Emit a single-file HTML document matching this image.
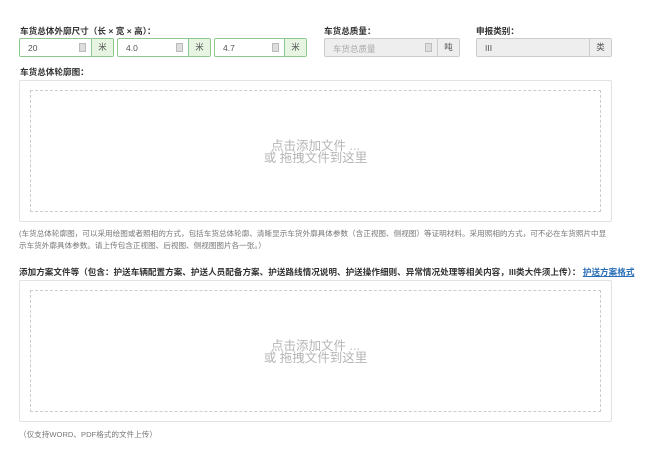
<!DOCTYPE html>
<html><head><meta charset="utf-8"><style>
*{box-sizing:border-box;margin:0;padding:0}
body{width:645px;height:449px;background:#fff;font-family:"Liberation Sans","Noto Sans CJK SC",sans-serif;position:relative;overflow:hidden;color:#333}
.a{position:absolute}
.lbl{font-size:8.6px;font-weight:bold;color:#333;white-space:nowrap}
.inp{position:absolute;height:19px;border:1px solid #8fc98f;border-radius:2px;display:flex;font-size:8.5px;background:#fff}
.inp .t{flex:1;padding:4px 8px;color:#555;position:relative}
.inp .ad{width:22px;border-left:1px solid #8fc98f;background:#e6f4e1;text-align:center;line-height:17px;color:#555}
.sp{position:absolute;right:5px;top:4px;width:7px;height:9px;background:#ddd;border:1px solid #bbb}
.g{border-color:#ccc;background:#eee}
.g .ad{border-color:#ccc;background:#eee}
.box{position:absolute;left:19px;width:593px;height:142px;border:1px solid #e2e2e2;border-radius:2px}
.dash{position:absolute;left:10px;top:9px;right:10px;bottom:9px;border:1px dashed #ccc;text-align:center;color:#b5b5b5;font-size:12.5px;line-height:12px;padding-top:49px}
.note{font-size:7.6px;color:#777;line-height:12px;white-space:nowrap}
</style></head><body>
<div class="a lbl" style="left:20px;top:25px">车货总体外廓尺寸（长 × 宽 × 高）：</div>
<div class="inp" style="left:19px;top:38px;width:95px"><div class="t">20<span class="sp"></span></div><div class="ad">米</div></div>
<div class="inp" style="left:117px;top:38px;width:94px"><div class="t">4.0<span class="sp"></span></div><div class="ad">米</div></div>
<div class="inp" style="left:214px;top:38px;width:93px"><div class="t">4.7<span class="sp"></span></div><div class="ad">米</div></div>
<div class="a lbl" style="left:324px;top:25px">车货总质量：</div>
<div class="inp g" style="left:324px;top:38px;width:136px"><div class="t" style="color:#aaa">车货总质量<span class="sp"></span></div><div class="ad">吨</div></div>
<div class="a lbl" style="left:476px;top:25px">申报类别：</div>
<div class="inp g" style="left:476px;top:38px;width:136px"><div class="t">III</div><div class="ad">类</div></div>
<div class="a lbl" style="left:20px;top:66px">车货总体轮廓图：</div>
<div class="box" style="top:80px"><div class="dash">点击添加文件 ...<br>或 拖拽文件到这里</div></div>
<div class="a note" style="left:19px;top:228px">(车货总体轮廓图，可以采用绘图或者照相的方式，包括车货总体轮廓、清晰显示车货外廓具体参数（含正视图、侧视图）等证明材料。采用照相的方式，可不必在车货照片中显<br>示车货外廓具体参数。请上传包含正视图、后视图、侧视图图片各一张。）</div>
<div class="a lbl" style="left:19px;top:266px">添加方案文件等（包含：护送车辆配置方案、护送人员配备方案、护送路线情况说明、护送操作细则、异常情况处理等相关内容，III类大件须上传）： <span style="color:#2a6fb8;text-decoration:underline">护送方案格式</span></div>
<div class="box" style="top:280px"><div class="dash">点击添加文件 ...<br>或 拖拽文件到这里</div></div>
<div class="a note" style="left:19px;top:429px">（仅支持WORD、PDF格式的文件上传）</div>
</body></html>
